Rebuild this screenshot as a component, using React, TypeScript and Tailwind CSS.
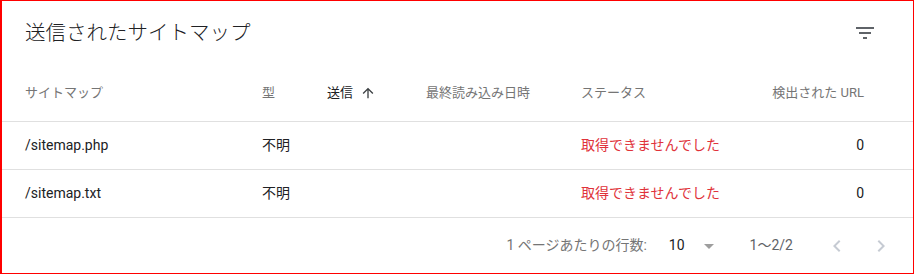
import React from "react"

const font = { fontFamily: "Roboto, 'Noto Sans CJK JP', sans-serif" }

interface Row {
  path: string
  type: string
  submitted: string
  lastRead: string
  status: string
  urls: number
}

const rows: Row[] = [
  { path: "/sitemap.php", type: "不明", submitted: "", lastRead: "", status: "取得できませんでした", urls: 0 },
  { path: "/sitemap.txt", type: "不明", submitted: "", lastRead: "", status: "取得できませんでした", urls: 0 },
]

function FilterIcon() {
  return (
    <svg width="24" height="24" viewBox="0 0 24 24" fill="#5f6368">
      <path d="M10 18h4v-2h-4v2zM3 6v2h18V6H3zm3 7h12v-2H6v2z" />
    </svg>
  )
}

function ArrowUp() {
  return (
    <svg width="16" height="16" viewBox="0 0 24 24" fill="#3c4043">
      <path d="M4 12l1.41 1.41L11 7.83V20h2V7.83l5.58 5.59L20 12l-8-8-8 8z" />
    </svg>
  )
}

function DropDown() {
  return (
    <svg width="24" height="24" viewBox="0 0 24 24" fill="#9e9e9e">
      <path d="M7 10l5 5 5-5z" />
    </svg>
  )
}

function ChevronLeft() {
  return (
    <svg width="24" height="24" viewBox="0 0 24 24" fill="#c6cbd3">
      <path d="M15.41 7.41L14 6l-6 6 6 6 1.41-1.41L10.83 12z" />
    </svg>
  )
}

function ChevronRight() {
  return (
    <svg width="24" height="24" viewBox="0 0 24 24" fill="#c6cbd3">
      <path d="M10 6L8.59 7.41 13.17 12l-4.58 4.59L10 18l6-6z" />
    </svg>
  )
}

export default function App() {
  return (
    <div
      className="w-[914px] h-[274px] border border-l-2 border-[#ff0000] bg-white flex flex-col"
      style={font}
    >
      {/* title */}
      <div className="h-[64px] flex items-center justify-between pl-[23px] pr-[36px]">
        <h1 className="text-[20.5px] text-[#202124] font-light">送信されたサイトマップ</h1>
        <FilterIcon />
      </div>

      {/* header */}
      <div className="h-[57px] flex items-center border-b border-[#e0e0e0] pl-[23px] pr-[49px] text-[13px] text-[#757575]">
        <div className="w-[237px]">サイトマップ</div>
        <div className="w-[65px]">型</div>
        <div className="w-[99px] flex items-center text-[#202124]">
          送信
          <span className="ml-[7px]">
            <ArrowUp />
          </span>
        </div>
        <div className="w-[155px]">最終読み込み日時</div>
        <div className="flex-1">ステータス</div>
        <div className="text-right">検出された URL</div>
      </div>

      {rows.map((r) => (
        <div
          key={r.path}
          className="h-[48px] flex items-center border-b border-[#e0e0e0] pl-[23px] pr-[49px] text-[14px] text-[#202124]"
        >
          <div className="w-[237px]">{r.path}</div>
          <div className="w-[65px]">{r.type}</div>
          <div className="w-[99px]">{r.submitted}</div>
          <div className="w-[155px]">{r.lastRead}</div>
          <div className="flex-1 text-[#e0323a]">{r.status}</div>
          <div className="text-right">{r.urls}</div>
        </div>
      ))}

      {/* pagination */}
      <div className="flex-1 flex items-center justify-end pr-[20px] text-[14px]">
        <span className="text-[#757575]">1 ページあたりの行数:</span>
        <span className="ml-[22px] text-[#202124]">10</span>
        <span className="ml-[12px]">
          <DropDown />
        </span>
        <span className="ml-[29px] text-[#5f6368]">1〜2/2</span>
        <span className="ml-[32px]">
          <ChevronLeft />
        </span>
        <span className="ml-[20px]">
          <ChevronRight />
        </span>
      </div>
    </div>
  )
}
